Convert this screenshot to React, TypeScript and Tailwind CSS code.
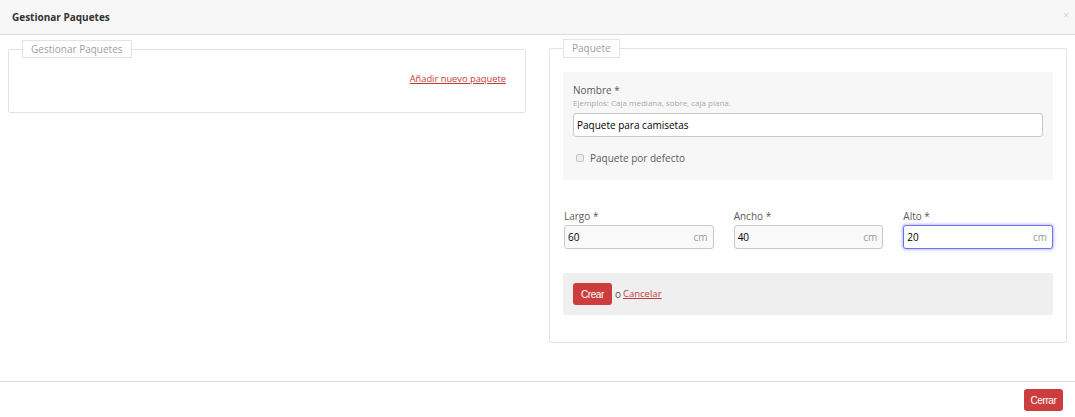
import { useState } from "react";

const font = { fontFamily: '"Open Sans", "Liberation Sans", sans-serif' };
const btnFont = { fontFamily: '"Liberation Sans", Arial, sans-serif' };

function DimField({ label, value, focused }: { label: string; value: string; focused?: boolean }) {
  return (
    <div className="flex flex-col">
      <label className="text-[10px] leading-[14px] text-[#5a5a5a] mb-[2px]">{label}</label>
      <div
        className={
          focused
            ? "flex items-center h-[24px] rounded-[3px] border border-[#6f6ff5] bg-white shadow-[0_0_3px_1px_rgba(110,110,245,0.45)]"
            : "flex items-center h-[24px] rounded-[3px] border border-[#c8c8c8] bg-[#f9f9f9]"
        }
      >
        <input
          defaultValue={value}
          className="flex-1 min-w-0 bg-transparent px-[3px] text-[10px] text-black outline-none"
        />
        <span className="pr-[5px] text-[10px] text-[#999]">cm</span>
      </div>
    </div>
  );
}

export default function App() {
  const [isDefault, setIsDefault] = useState(false);

  return (
    <div className="w-[1075px] h-[417px] bg-white flex flex-col" style={font}>
      <div className="h-[35px] bg-[#f7f7f7] border-b border-[#dcdcdc] flex items-center justify-between pl-[12px] pr-[6px]">
        <span className="text-[10px] font-bold text-[#333]">Gestionar Paquetes</span>
        <span className="text-[10px] leading-none text-[#d5d5d5] -mt-[4px]">×</span>
      </div>

      <div className="flex-1 flex items-start gap-[23px] pl-[8px] pr-[8px] pt-[5px]">
        <fieldset className="w-[519px] border border-[#e3e3e3] rounded-[2px] pb-[26px]">
          <legend className="ml-[13px] px-[8px] border border-[#e3e3e3] bg-white text-[10px] leading-[16px] text-[#a0a0a0]">
            Gestionar Paquetes
          </legend>
          <div className="flex justify-end pr-[19px] pt-[14px]">
            <a href="#" className="text-[9.3px] leading-[14px] text-[#c23b3b] underline">
              Añadir nuevo paquete
            </a>
          </div>
        </fieldset>

        <fieldset className="w-[519px] border border-[#e3e3e3] rounded-[2px] px-[13px] pt-[14px] pb-[27px] -mt-[1px]">
          <legend className="px-[8px] border border-[#e3e3e3] bg-white text-[10px] leading-[17px] text-[#a0a0a0]">
            Paquete
          </legend>

          <div className="bg-[#f7f7f7] px-[10px] pt-[11px] pb-[15px]">
            <label className="block text-[10px] leading-[14px] text-[#5a5a5a]">Nombre *</label>
            <p className="text-[8px] leading-[12px] text-[#aaa]">Ejemplos: Caja mediana, sobre, caja plana.</p>
            <input
              defaultValue="Paquete para camisetas"
              className="mt-[4px] w-full h-[24px] rounded-[3px] border border-[#c8c8c8] bg-white px-[3px] text-[10px] text-black outline-none"
            />
            <label className="flex items-center gap-[6px] mt-[14px] pl-[3px] text-[10px] leading-[14px] text-[#5a5a5a]">
              <input
                type="checkbox"
                checked={isDefault}
                onChange={(e) => setIsDefault(e.target.checked)}
                className="w-[8px] h-[8px] appearance-none rounded-[2px] border border-[#c4c4c4] bg-[#eee]"
              />
              Paquete por defecto
            </label>
          </div>

          <div className="grid grid-cols-3 gap-[20px] mt-[29px] pl-[1px]">
            <DimField label="Largo *" value="60" />
            <DimField label="Ancho *" value="40" />
            <DimField label="Alto *" value="20" focused />
          </div>

          <div className="mt-[24px] bg-[#efefef] rounded-[2px] px-[10px] py-[10px] flex items-center gap-[2px] text-[10px] text-[#555]">
            <button
              className="h-[22px] w-[39px] rounded-[3px] bg-[#cc3e3e] text-white text-[10px] tracking-[-0.4px]"
              style={btnFont}
            >
              Crear
            </button>
            <span className="ml-[1px]">o</span>
            <a href="#" className="text-[9.5px] text-[#c23b3b] underline">
              Cancelar
            </a>
          </div>
        </fieldset>
      </div>

      <div className="h-[36px] border-t border-[#dcdcdc] flex items-center justify-end pr-[12px]">
        <button
          className="h-[22px] w-[39px] rounded-[3px] bg-[#cc3e3e] text-white text-[10px] tracking-[-0.4px] mt-[1px]"
          style={btnFont}
        >
          Cerrar
        </button>
      </div>
    </div>
  );
}
